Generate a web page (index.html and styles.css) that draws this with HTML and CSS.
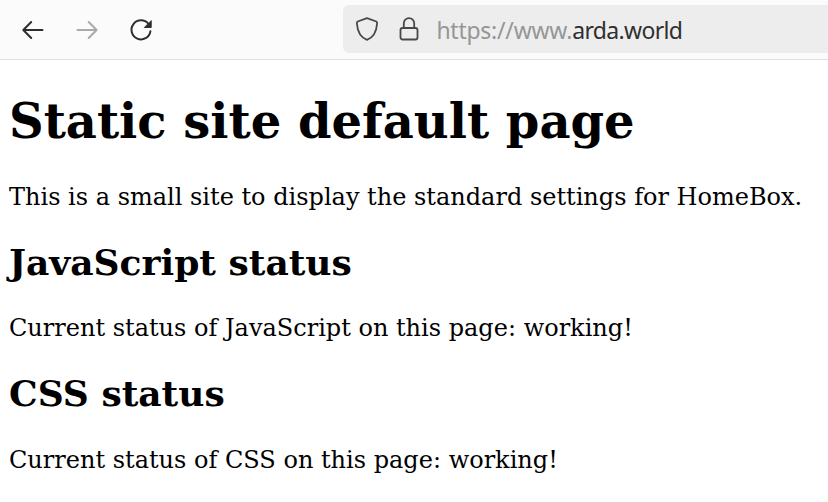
FILE: index.html
```html
<!DOCTYPE html>
<html lang="en">
<head>
<meta charset="utf-8">
<title>Static site default page</title>
<link rel="stylesheet" href="styles.css">
</head>
<body>
<header class="toolbar">
  <nav class="nav">
    <svg class="icon" viewBox="0 0 24 24"><path d="M21.500 12H2.600M10.200 4L2.300 12l7.900 8"/></svg>
    <svg class="icon icon-disabled" viewBox="0 0 24 24"><path d="M2.500 12h19M13.700 4l7.900 8-7.900 8"/></svg>
    <svg class="icon" viewBox="0 0 24 24"><path d="M19.500 6A9.500 9.500 0 1 0 21.400 13.300"/><path class="solid" d="M22.200 3v6.500h-6.500z"/></svg>
  </nav>
  <div class="address">
    <svg class="icon icon-site" viewBox="0 0 24 24"><path d="M12 1.200L21.300 4.500Q22.200 5 22.100 6.500C21.500 14.500 18.500 20.500 12 22.800C5.500 20.500 2.500 14.500 1.900 6.500Q1.800 5 2.700 4.500Z"/></svg>
    <svg class="icon icon-site" viewBox="0 0 24 24"><rect x="3.500" y="11" width="17" height="11.500" rx="2"/><path d="M6.800 11V6.300a5.200 5.200 0 0 1 10.400 0V11"/></svg>
    <span class="url">https://www.<b>arda.world</b></span>
  </div>
</header>
<main class="page">
  <h1>Static site default page</h1>
  <p>This is a small site to display the standard settings for HomeBox.</p>
  <h2>JavaScript status</h2>
  <p>Current status of JavaScript on this page: working!</p>
  <h2 class="css-heading">CSS status</h2>
  <p>Current status of CSS on this page: working!</p>
</main>
</body>
</html>
```
FILE: styles.css
```css
body{margin:0;background:#fff;color:#000;font-family:"DejaVu Serif",serif;font-size:24px;overflow:hidden}
.toolbar{display:flex;box-sizing:border-box;height:60px;background:#fbfbfb;border-bottom:1px solid #e0e0e0}
.nav{display:flex;align-items:center;gap:30px;padding:1px 0 0 21px;width:322.400px}
.icon{width:24px;height:24px;fill:none;stroke:#2e2e2e;stroke-width:2;stroke-linecap:round;stroke-linejoin:round;flex:none}
.icon-disabled{stroke:#aaa}
.icon-site{stroke:#484848;stroke-width:1.8}
.solid{fill:#2e2e2e;stroke-width:1}
.address{display:flex;align-items:center;flex:1;gap:18px;height:48px;margin-top:5px;padding-left:12px;background:#ededed;border-radius:6px 0 0 6px}
.url{font:23px "Noto Sans",sans-serif;color:#969696;white-space:nowrap;letter-spacing:-.25px;margin:1px 0 0 -3px}
.url b{font-weight:400;color:#303030;letter-spacing:-.65px}
.page{padding:0 9px;white-space:nowrap}
h1{font-size:48px;line-height:56px;margin:33px 0 34px}
h2{font-size:36px;line-height:42px;margin:30px 0 31px}
.css-heading{margin-bottom:32px}
p{line-height:28px;margin:0}
```
